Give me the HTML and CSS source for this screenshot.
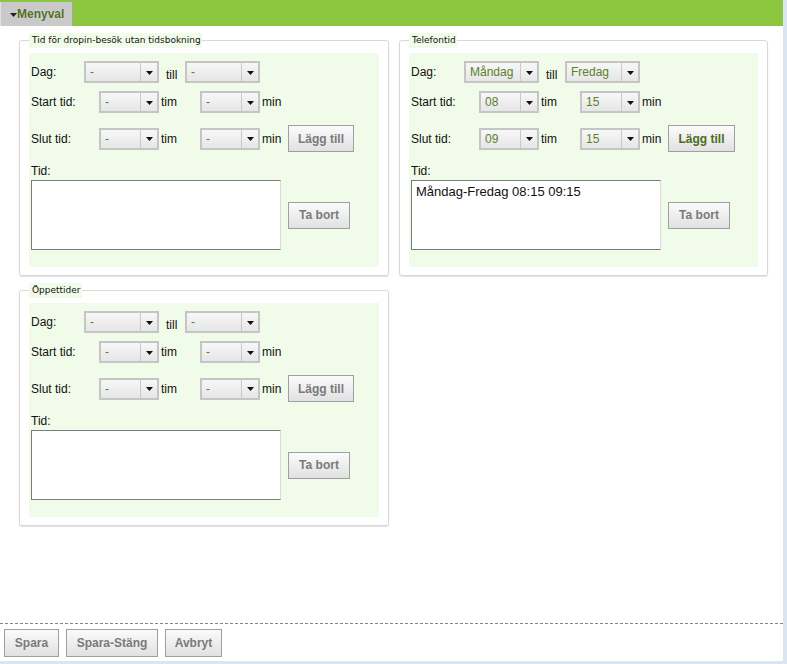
FILE: index.html
```html
<!DOCTYPE html>
<html lang="sv">
<head>
<meta charset="utf-8">
<title>Tider</title>
<link rel="stylesheet" href="styles.css">
</head>
<body>
<div class="page">
  <header class="topbar">
    <div class="tab"><svg class="caret" width="7" height="4" viewBox="0 0 7 4"><path d="M0 0H7L3.5 4Z" fill="#222"/></svg>Menyval</div>
  </header>

  <main class="content">
    <fieldset class="panel">
      <legend>Tid för dropin-besök utan tidsbokning</legend>
      <div class="inner">
        <div class="row r1">
          <span class="lbl lbl-dag">Dag:</span>
          <span class="sel w75"><span class="val">-</span><span class="arr"><svg width="7" height="4" viewBox="0 0 7 4"><path d="M0 0H7L3.5 4Z" fill="#111"/></svg></span></span>
          <span class="till">till</span>
          <span class="sel w75"><span class="val">-</span><span class="arr"><svg width="7" height="4" viewBox="0 0 7 4"><path d="M0 0H7L3.5 4Z" fill="#111"/></svg></span></span>
        </div>
        <div class="row r2">
          <span class="lbl">Start tid:</span>
          <span class="sel w60"><span class="val">-</span><span class="arr"><svg width="7" height="4" viewBox="0 0 7 4"><path d="M0 0H7L3.5 4Z" fill="#111"/></svg></span></span>
          <span class="unit tim">tim</span>
          <span class="sel w60"><span class="val">-</span><span class="arr"><svg width="7" height="4" viewBox="0 0 7 4"><path d="M0 0H7L3.5 4Z" fill="#111"/></svg></span></span>
          <span class="unit min">min</span>
        </div>
        <div class="row r3">
          <span class="lbl">Slut tid:</span>
          <span class="sel w60"><span class="val">-</span><span class="arr"><svg width="7" height="4" viewBox="0 0 7 4"><path d="M0 0H7L3.5 4Z" fill="#111"/></svg></span></span>
          <span class="unit tim">tim</span>
          <span class="sel w60"><span class="val">-</span><span class="arr"><svg width="7" height="4" viewBox="0 0 7 4"><path d="M0 0H7L3.5 4Z" fill="#111"/></svg></span></span>
          <span class="unit min">min</span>
          <button class="btn btn-add" type="button">Lägg till</button>
        </div>
        <div class="tidlbl">Tid:</div>
        <div class="row r4">
          <div class="area"></div>
          <button class="btn btn-del" type="button">Ta bort</button>
        </div>
      </div>
    </fieldset>

    <fieldset class="panel">
      <legend>Telefontid</legend>
      <div class="inner">
        <div class="row r1">
          <span class="lbl lbl-dag">Dag:</span>
          <span class="sel w75"><span class="val">Måndag</span><span class="arr"><svg width="7" height="4" viewBox="0 0 7 4"><path d="M0 0H7L3.5 4Z" fill="#111"/></svg></span></span>
          <span class="till">till</span>
          <span class="sel w75"><span class="val">Fredag</span><span class="arr"><svg width="7" height="4" viewBox="0 0 7 4"><path d="M0 0H7L3.5 4Z" fill="#111"/></svg></span></span>
        </div>
        <div class="row r2">
          <span class="lbl">Start tid:</span>
          <span class="sel w60"><span class="val">08</span><span class="arr"><svg width="7" height="4" viewBox="0 0 7 4"><path d="M0 0H7L3.5 4Z" fill="#111"/></svg></span></span>
          <span class="unit tim">tim</span>
          <span class="sel w60"><span class="val">15</span><span class="arr"><svg width="7" height="4" viewBox="0 0 7 4"><path d="M0 0H7L3.5 4Z" fill="#111"/></svg></span></span>
          <span class="unit min">min</span>
        </div>
        <div class="row r3">
          <span class="lbl">Slut tid:</span>
          <span class="sel w60"><span class="val">09</span><span class="arr"><svg width="7" height="4" viewBox="0 0 7 4"><path d="M0 0H7L3.5 4Z" fill="#111"/></svg></span></span>
          <span class="unit tim">tim</span>
          <span class="sel w60"><span class="val">15</span><span class="arr"><svg width="7" height="4" viewBox="0 0 7 4"><path d="M0 0H7L3.5 4Z" fill="#111"/></svg></span></span>
          <span class="unit min">min</span>
          <button class="btn btn-add active" type="button">Lägg till</button>
        </div>
        <div class="tidlbl">Tid:</div>
        <div class="row r4">
          <div class="area">Måndag-Fredag 08:15 09:15</div>
          <button class="btn btn-del" type="button">Ta bort</button>
        </div>
      </div>
    </fieldset>

    <fieldset class="panel">
      <legend>Öppettider</legend>
      <div class="inner">
        <div class="row r1">
          <span class="lbl lbl-dag">Dag:</span>
          <span class="sel w75"><span class="val">-</span><span class="arr"><svg width="7" height="4" viewBox="0 0 7 4"><path d="M0 0H7L3.5 4Z" fill="#111"/></svg></span></span>
          <span class="till">till</span>
          <span class="sel w75"><span class="val">-</span><span class="arr"><svg width="7" height="4" viewBox="0 0 7 4"><path d="M0 0H7L3.5 4Z" fill="#111"/></svg></span></span>
        </div>
        <div class="row r2">
          <span class="lbl">Start tid:</span>
          <span class="sel w60"><span class="val">-</span><span class="arr"><svg width="7" height="4" viewBox="0 0 7 4"><path d="M0 0H7L3.5 4Z" fill="#111"/></svg></span></span>
          <span class="unit tim">tim</span>
          <span class="sel w60"><span class="val">-</span><span class="arr"><svg width="7" height="4" viewBox="0 0 7 4"><path d="M0 0H7L3.5 4Z" fill="#111"/></svg></span></span>
          <span class="unit min">min</span>
        </div>
        <div class="row r3">
          <span class="lbl">Slut tid:</span>
          <span class="sel w60"><span class="val">-</span><span class="arr"><svg width="7" height="4" viewBox="0 0 7 4"><path d="M0 0H7L3.5 4Z" fill="#111"/></svg></span></span>
          <span class="unit tim">tim</span>
          <span class="sel w60"><span class="val">-</span><span class="arr"><svg width="7" height="4" viewBox="0 0 7 4"><path d="M0 0H7L3.5 4Z" fill="#111"/></svg></span></span>
          <span class="unit min">min</span>
          <button class="btn btn-add" type="button">Lägg till</button>
        </div>
        <div class="tidlbl">Tid:</div>
        <div class="row r4">
          <div class="area"></div>
          <button class="btn btn-del" type="button">Ta bort</button>
        </div>
      </div>
    </fieldset>
  </main>

  <footer class="footer">
    <button class="btn fbtn b-spara" type="button">Spara</button>
    <button class="btn fbtn b-stang" type="button">Spara-Stäng</button>
    <button class="btn fbtn b-avbryt" type="button">Avbryt</button>
  </footer>
</div>
</body>
</html>
```

FILE: styles.css
```css
* { box-sizing: border-box; }

html, body {
  margin: 0;
  padding: 0;
}

body {
  background: #dbe5f1;
  font-family: "Liberation Sans", Arial, sans-serif;
  font-size: 12px;
  color: #111;
}

.page {
  width: 783px;
  height: 661px;
  background: #fff;
  display: flex;
  flex-direction: column;
}

/* top bar */
.topbar {
  height: 26px;
  background: #8cc63f;
  padding-top: 2px;
  display: flex;
}

.tab {
  width: 73px;
  height: 24px;
  background: #c9c9c9;
  border-left: 1px solid #e2e2e2;
  border-right: 1px solid #a5a5a5;
  display: flex;
  align-items: center;
  padding-left: 9px;
  font-weight: bold;
  font-size: 12px;
  color: #4f6f1c;
  text-shadow: 0 0 1px rgba(255,255,255,0.6);
}

.caret {
  margin-top: 1px;
}

/* content grid */
.content {
  flex: 1;
  display: grid;
  grid-template-columns: 370px 369px;
  grid-auto-rows: min-content;
  column-gap: 10px;
  row-gap: 7px;
  padding: 7px 0 0 19px;
  align-content: start;
}

.panel {
  margin: 0;
  min-width: 0;
  padding: 0 9px 8px 9px;
  border: 1px solid #d8d8d8;
  border-radius: 3px;
  box-shadow: 0 1px 1px rgba(0,0,0,0.12);
}

.panel legend {
  font-family: "DejaVu Sans", Verdana, sans-serif;
  font-size: 9px;
  line-height: 15px;
  height: 15px;
  padding: 0 1px 0 3px;
  margin-bottom: -4px;
  background: #f1fbea;
  color: #111;
}

.inner {
  margin-top: 9px;
  background: #f1fbea;
  padding: 8px 0 17px 2px;
}

.row {
  display: flex;
  align-items: center;
}

.r1 { height: 22px; }
.r2 { height: 22px; margin-top: 8px; }
.r3 { height: 27px; margin-top: 12px; }

.lbl {
  width: 68px;
  flex: none;
}
.lbl-dag { width: 53px; }

.till {
  width: 19px;
  margin-left: 7px;
  flex: none;
  align-self: flex-end;
  line-height: 14px;
  margin-bottom: 1px;
}

.unit { flex: none; margin-left: 2px; }
.tim { width: 39px; }
.min { width: 26px; }

/* pseudo select */
.sel {
  flex: none;
  height: 22px;
  display: flex;
  border: 2px solid #c5c5c5;
  background: linear-gradient(#f7f7f7, #e6e6e6);
  color: #5c7f2a;
}
.w75 { width: 75px; }
.w60 { width: 60px; }

.sel .val {
  flex: 1;
  padding-left: 4px;
  line-height: 18px;
}

.sel .arr {
  width: 17px;
  border-left: 1px solid #c9c9c9;
  display: flex;
  align-items: center;
  justify-content: center;
  padding-top: 1px;
}

/* buttons */
.btn {
  font-family: "Liberation Sans", Arial, sans-serif;
  font-weight: bold;
  font-size: 12px;
  color: #7a7a7a;
  border: 1px solid #9f9f9f;
  background: linear-gradient(#fbfbfb, #e1e1e1);
  height: 27px;
  padding: 0;
  margin: 0;
}

.btn-add { width: 66px; flex: none; }
.btn-add.active { width: 67px; color: #4a6d1a; }

.btn-del { width: 62px; flex: none; margin-left: 7px; }

.tidlbl {
  margin-top: 12px;
  line-height: 14px;
  height: 14px;
}

.r4 { margin-top: 2px; }

.area {
  width: 250px;
  height: 70px;
  flex: none;
  background: #fff;
  border: 1px solid #7b7b7b;
  border-right-color: #dcdcdc;
  font-size: 13px;
  line-height: 15px;
  padding: 3px 4px;
  color: #111;
}

/* footer */
.footer {
  height: 38px;
  border-top: 1px dashed #858585;
  display: flex;
  gap: 7px;
  padding: 5px 0 0 4px;
}

.fbtn { height: 28px; }
.b-spara { width: 55px; }
.b-stang { width: 92px; }
.b-avbryt { width: 57px; }
```
